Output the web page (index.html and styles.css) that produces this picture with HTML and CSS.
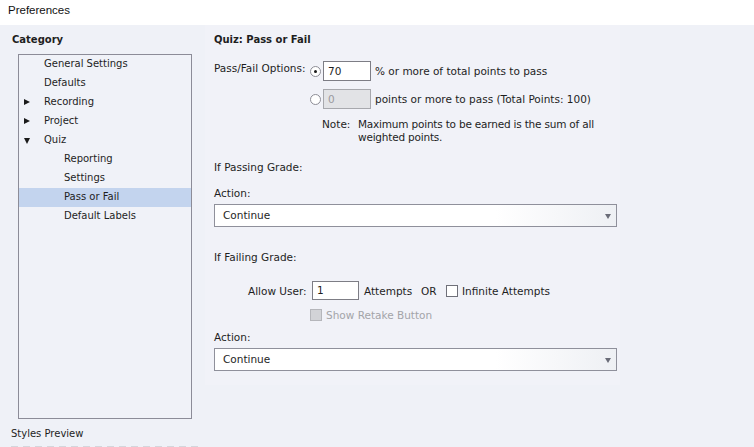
FILE: index.html
```html
<!DOCTYPE html>
<html>
<head>
<meta charset="utf-8">
<link rel="stylesheet" href="styles.css">
</head>
<body>
<div class="titlebar">Preferences</div>
<div class="main">
  <div class="sidebar">
    <div class="cat-title">Category</div>
    <div class="tree">
      <div class="row l1">General Settings</div>
      <div class="row l1">Defaults</div>
      <div class="row l1"><span class="tri right"></span>Recording</div>
      <div class="row l1"><span class="tri right"></span>Project</div>
      <div class="row l1"><span class="tri down"></span>Quiz</div>
      <div class="row l2">Reporting</div>
      <div class="row l2">Settings</div>
      <div class="row l2 sel">Pass or Fail</div>
      <div class="row l2">Default Labels</div>
    </div>
    <div class="styles-preview">Styles Preview</div>
    <div class="dashes"></div>
  </div>
  <div class="panel">
    <div class="heading">Quiz: Pass or Fail</div>
    <div class="options">
      <div class="opt-label">Pass/Fail Options:</div>
      <div class="opt-col">
        <div class="opt-row">
          <span class="radio checked"></span>
          <span class="field">70</span>
          <span>% or more of total points to pass</span>
        </div>
        <div class="opt-row second">
          <span class="radio"></span>
          <span class="field disabled">0</span>
          <span>points or more to pass (Total Points: 100)</span>
        </div>
        <div class="note">
          <span class="note-label">Note:</span>
          <span class="note-text">Maximum points to be earned is the sum of all<br>weighted points.</span>
        </div>
      </div>
    </div>
    <div class="section-label pass">If Passing Grade:</div>
    <div class="action-label">Action:</div>
    <div class="select"><span>Continue</span><span class="arrow"></span></div>
    <div class="section-label fail">If Failing Grade:</div>
    <div class="allow-row">
      <span class="allow-label">Allow User:</span>
      <span class="field small">1</span>
      <span class="attempts">Attempts</span>
      <span class="or">OR</span>
      <span class="checkbox"></span>
      <span>Infinite Attempts</span>
    </div>
    <div class="retake-row">
      <span class="checkbox disabled"></span>
      <span class="grey">Show Retake Button</span>
    </div>
    <div class="action-label a2">Action:</div>
    <div class="select"><span>Continue</span><span class="arrow"></span></div>
  </div>
</div>
</body>
</html>
```
FILE: styles.css
```css
html, body {
  margin: 0;
  padding: 0;
}
body {
  width: 754px;
  height: 447px;
  overflow: hidden;
  background: #eff1f7;
  font-family: "DejaVu Sans", sans-serif;
  font-size: 10.5px;
  color: #1e1e1e;
}
.titlebar {
  height: 25px;
  background: #ffffff;
  font-family: "Liberation Sans", sans-serif;
  font-size: 11.5px;
  line-height: 21px;
  padding-left: 8px;
  color: #111;
  box-sizing: border-box;
}
.main {
  display: flex;
  height: 422px;
}
.sidebar {
  width: 205px;
  flex: none;
  box-sizing: border-box;
  padding-left: 12px;
}
.cat-title {
  font-weight: bold;
  font-size: 10px;
  height: 29px;
  line-height: 30px;
}
.tree {
  margin-left: 6px;
  width: 174px;
  height: 365px;
  box-sizing: border-box;
  border: 1px solid #8c8c98;
  background: #f0f2f8;
}
.row {
  height: 19px;
  line-height: 18px;
  font-size: 10px;
  position: relative;
}
.row.l1 { padding-left: 25px; }
.row.l2 { padding-left: 45px; }
.row.sel { background: #c3d4ee; }
.tri {
  position: absolute;
  left: 5px;
  top: 6px;
  width: 0;
  height: 0;
}
.tri.right {
  border-top: 3.5px solid transparent;
  border-bottom: 3.5px solid transparent;
  border-left: 6px solid #1a1a1a;
}
.tri.down {
  top: 7px;
  border-left: 3.5px solid transparent;
  border-right: 3.5px solid transparent;
  border-top: 6px solid #1a1a1a;
}
.styles-preview {
  margin-left: -1px;
  margin-top: 8px;
  font-size: 10px;
  line-height: 13px;
}
.dashes {
  margin-left: -1px;
  margin-top: 6px;
  width: 190px;
  height: 2px;
  background: repeating-linear-gradient(90deg, #d4d6dc 0 7px, transparent 7px 12px);
}
.panel {
  width: 415px;
  height: 360px;
  flex: none;
  box-sizing: border-box;
  background: #f1f2f8;
  padding-left: 9px;
}
.heading {
  font-weight: bold;
  font-size: 10px;
  height: 30px;
  line-height: 30px;
}
.options {
  display: flex;
  margin-top: 6px;
}
.opt-label {
  width: 96px;
  flex: none;
  line-height: 18px;
  margin-top: -2px;
}
.opt-col {
  display: flex;
  flex-direction: column;
}
.opt-row {
  display: flex;
  align-items: center;
  height: 20px;
}
.opt-row.second {
  margin-top: 8px;
}
.radio {
  width: 11px;
  height: 11px;
  box-sizing: border-box;
  border: 1px solid #8d8d96;
  border-radius: 50%;
  background: #fff;
  margin-right: 2px;
  position: relative;
  flex: none;
}
.radio.checked::after {
  content: "";
  position: absolute;
  left: 3px;
  top: 3px;
  width: 3px;
  height: 3px;
  border-radius: 50%;
  background: #1a1a1a;
}
.field {
  width: 48px;
  height: 20px;
  box-sizing: border-box;
  border: 1px solid #7d7d85;
  background: #fff;
  padding-left: 4px;
  line-height: 18px;
  margin-right: 4px;
  flex: none;
}
.field.disabled {
  background: #e2e3e6;
  border-color: #a7a8ad;
  color: #9a9a9e;
}
.field.small {
  width: 47px;
  height: 19px;
  line-height: 17px;
  margin-right: 5px;
}
.note {
  display: flex;
  margin-top: 9px;
  line-height: 13px;
  margin-left: 12px;
}
.note-label {
  width: 36px;
  flex: none;
}
.note-text {
  letter-spacing: -0.2px;
}
.section-label.pass {
  margin-top: 17px;
  line-height: 13px;
}
.action-label {
  margin-top: 13px;
  line-height: 13px;
  height: 13px;
}
.action-label.a2 {
  margin-top: 9px;
}
.select {
  margin-top: 4px;
  width: 403px;
  height: 23px;
  box-sizing: border-box;
  border: 1px solid #8f909b;
  background: linear-gradient(90deg, #ffffff 0%, #ffffff 70%, #eef0f4 100%);
  padding-left: 8px;
  line-height: 21px;
  position: relative;
}
.arrow {
  position: absolute;
  right: 5px;
  top: 9px;
  width: 0;
  height: 0;
  border-left: 3.5px solid transparent;
  border-right: 3.5px solid transparent;
  border-top: 5px solid #6a6c78;
}
.section-label.fail {
  margin-top: 24px;
  line-height: 13px;
}
.allow-row {
  display: flex;
  align-items: center;
  margin-top: 17px;
  height: 19px;
  padding-left: 34px;
}
.allow-label {
  width: 64px;
  flex: none;
}
.attempts {
  width: 57px;
}
.or {
  width: 25px;
}
.checkbox {
  width: 12px;
  height: 12px;
  box-sizing: border-box;
  border: 1px solid #6f7079;
  background: #fff;
  margin-right: 4px;
  flex: none;
}
.checkbox.disabled {
  background: #d2d3d7;
  border-color: #b5b6bb;
}
.retake-row {
  display: flex;
  align-items: center;
  margin-top: 8px;
  height: 14px;
  padding-left: 96px;
}
.grey {
  color: #a3a4a8;
}
```
